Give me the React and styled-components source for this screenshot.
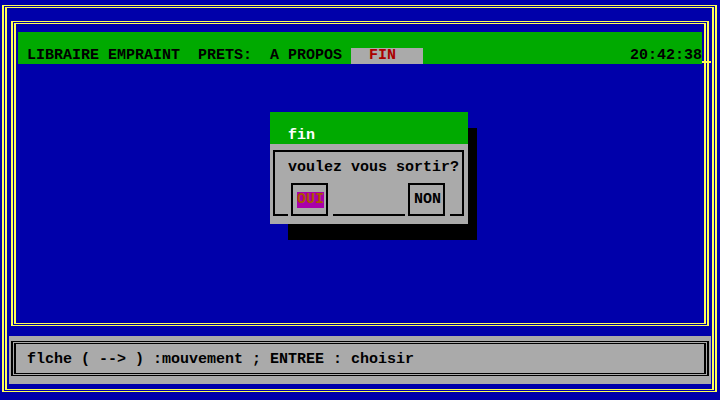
import React from 'react';
import styled, { createGlobalStyle } from 'styled-components';

const BLUE = '#0000AA';
const GREEN = '#00AA00';
const GRAY = '#AAAAAA';
const YELLOW = '#FFFF55';

const GlobalStyle = createGlobalStyle`
    html, body {
        margin: 0;
        padding: 0;
        background: ${BLUE};
    }
    body {
        font-family: 'Liberation Mono', 'DejaVu Sans Mono', monospace;
        font-weight: bold;
        font-size: 15px;
        line-height: 16px;
    }
`;

const Screen = styled.div`
    position: relative;
    width: 720px;
    height: 400px;
    padding: 5px 0 0 2px;
    box-sizing: border-box;
    background: ${BLUE};
    overflow: hidden;
`;

// double line frame: two nested boxes with a 1px gap
const FrameOuter = styled.div`
    width: ${props => props.width}px;
    height: ${props => props.height}px;
    margin-left: ${props => props.offset || 0}px;
    border-style: solid;
    border-color: ${props => props.color};
    border-width: ${props => props.thin ? '1px 2px' : '1px 2px'};
    padding: 1px;
    box-sizing: border-box;
`;

const FrameInner = styled.div`
    height: 100%;
    border-style: solid;
    border-color: ${props => props.color};
    border-width: 1px 2px;
    box-sizing: border-box;
    padding: ${props => props.pad || '0'};
    display: flex;
    flex-direction: column;
`;

const MenuBar = styled.div`
    position: relative;
    margin: 8px 0 0 2px;
    width: 684px;
    height: 32px;
    padding: 16px 0 0 9px;
    box-sizing: border-box;
    background: ${GREEN};
    color: #000;
    display: flex;
    white-space: pre;

    &::after {
        content: '';
        position: absolute;
        right: -9px;
        bottom: 1px;
        width: 9px;
        height: 2px;
        background: ${YELLOW};
    }
`;

const MenuItem = styled.span`
    background: ${props => props.active ? GRAY : 'transparent'};
    color: ${props => props.active ? '#AA0000' : '#000'};
`;

const Clock = styled.span`
    margin-left: auto;
`;

const StatusBar = styled.div`
    margin-top: 10px;
    width: 702px;
    height: 48px;
    padding: 5px 0 0 2px;
    box-sizing: border-box;
    background: ${GRAY};
`;

const StatusText = styled.div`
    padding: 8px 0 0 11px;
    color: #000;
    white-space: pre;
`;

const Dialog = styled.div`
    position: absolute;
    left: 270px;
    top: 112px;
    width: 198px;
    z-index: 1;

    &::before {
        content: '';
        position: absolute;
        left: 18px;
        top: 16px;
        width: 189px;
        height: 112px;
        background: #000;
        z-index: -1;
    }
`;

const DialogTitle = styled.div`
    height: 32px;
    padding: 16px 0 0 18px;
    box-sizing: border-box;
    background: ${GREEN};
    color: #fff;
`;

const DialogBody = styled.div`
    height: 80px;
    padding: 6px 0 0 3px;
    box-sizing: border-box;
    background: ${GRAY};
`;

const DialogFrame = styled.div`
    width: 191px;
    height: 66px;
    border: 2px solid #000;
    border-bottom: none;
    box-sizing: border-box;
`;

const Message = styled.div`
    margin-top: 8px;
    padding-left: 13px;
    color: #000;
    white-space: pre;
`;

const ButtonRow = styled.div`
    margin-top: 7px;
    height: 33px;
    display: flex;
    align-items: flex-end;
`;

const Segment = styled.div`
    width: ${props => props.width}px;
    height: 2px;
    margin-right: ${props => props.gap || 0}px;
    background: #000;
`;

const ButtonBox = styled.div`
    width: 37px;
    height: 33px;
    margin-right: ${props => props.gap || 0}px;
    border: 2px solid #000;
    padding: 7px 0 0 4px;
    box-sizing: border-box;
`;

const ButtonLabel = styled.span`
    display: inline-block;
    height: 16px;
    background: ${props => props.selected ? '#AA00AA' : 'transparent'};
    color: ${props => props.selected ? '#AA5500' : '#000'};
`;

export default function App() {
    return (
        <>
            <GlobalStyle />
            <Screen>
                <FrameOuter width={715} height={387} color={YELLOW}>
                    <FrameInner color={YELLOW} pad="13px 0 0 2px">
                        <FrameOuter width={698} height={305} offset={2} color={YELLOW}>
                            <FrameInner color={YELLOW}>
                                <MenuBar>
                                    <MenuItem>{'LIBRAIRE EMPRAINT  PRETS:  A PROPOS '}</MenuItem>
                                    <MenuItem active>{'  FIN   '}</MenuItem>
                                    <Clock>20:42:38</Clock>
                                </MenuBar>
                            </FrameInner>
                        </FrameOuter>
                        <StatusBar>
                            <FrameOuter width={698} height={35} color="#000">
                                <FrameInner color="#000">
                                    <StatusText>{'flche ( --> ) :mouvement ; ENTREE : choisir'}</StatusText>
                                </FrameInner>
                            </FrameOuter>
                        </StatusBar>
                    </FrameInner>
                </FrameOuter>

                <Dialog>
                    <DialogTitle>fin</DialogTitle>
                    <DialogBody>
                        <DialogFrame>
                            <Message>voulez vous sortir?</Message>
                            <ButtonRow>
                                <Segment width={13} gap={3} />
                                <ButtonBox gap={5}>
                                    <ButtonLabel selected>OUI</ButtonLabel>
                                </ButtonBox>
                                <Segment width={72} gap={3} />
                                <ButtonBox gap={5}>
                                    <ButtonLabel>NON</ButtonLabel>
                                </ButtonBox>
                                <Segment width={12} />
                            </ButtonRow>
                        </DialogFrame>
                    </DialogBody>
                </Dialog>
            </Screen>
        </>
    );
}
